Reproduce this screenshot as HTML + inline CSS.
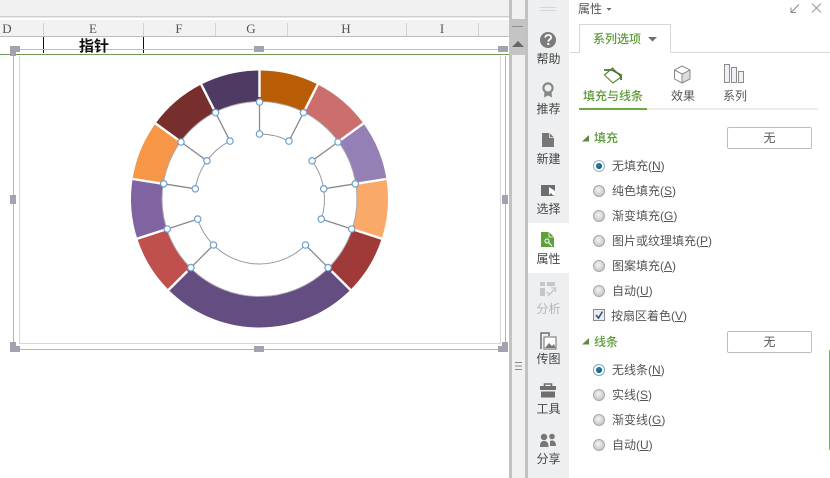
<!DOCTYPE html>
<html><head><meta charset="utf-8">
<style>
html,body{margin:0;padding:0;background:#fff}
body{width:830px;height:478px;position:relative;overflow:hidden;font-family:"Liberation Sans","Noto Sans CJK SC",sans-serif;font-size:12px;color:#555}
.a{position:absolute;white-space:nowrap;line-height:16px}
.c{position:absolute;top:20px;font:13px/17px "Liberation Serif",serif;color:#555;width:20px;text-align:center}
.s{position:absolute;width:41px;left:528px;text-align:center;font-size:12px;line-height:16px;color:#444}
.g{color:#5d9a38}
.b{position:absolute;left:727px;width:83px;height:20px;border:1px solid #bdbdbd;border-radius:2px;text-align:center;line-height:20px;color:#555}
u{text-underline-offset:1px}
svg{position:absolute;left:0;top:0}
</style></head><body>
<svg width="830" height="478" viewBox="0 0 830 478">
<defs><radialGradient id="rg" cx="45%" cy="40%" r="60%"><stop offset="0" stop-color="#f4f4f4"/><stop offset="1" stop-color="#c4c4c4"/></radialGradient>
<radialGradient id="rb" cx="45%" cy="40%" r="60%"><stop offset="0" stop-color="#2b8cab"/><stop offset="1" stop-color="#0f4f6e"/></radialGradient></defs>
<!-- sheet top -->
<rect x="0" y="0" width="509" height="16" fill="#f1f1f1"/>
<rect x="0" y="16" width="509" height="1.5" fill="#cfcfcf"/>
<rect x="0" y="20" width="509" height="16" fill="#f2f2f2"/>
<rect x="0" y="36" width="509" height="1" fill="#bdbdbd"/>
<g stroke="#d2d2d2" stroke-width="1"><path d="M43.5 23V36M143.5 23V36M215.5 23V36M287.5 23V36M406.5 23V36M478.5 23V36"/></g>
<path d="M43.5 37V53M143.5 37V53" stroke="#111" stroke-width="1"/>
<!-- chart frame -->
<path d="M20 49.5H498" stroke="#bcbcbc" stroke-width="1"/>
<path d="M13.5 56V349.5H505.5V56" fill="none" stroke="#b5b5b5" stroke-width="1"/>
<path d="M19.5 56V343.5H500.5V56" fill="none" stroke="#d8d8d8" stroke-width="1"/>
<rect x="0" y="54" width="509" height="1" fill="#6f9c57"/>
<g fill="#a3a3b0">
<path d="M10 46H20V52H16V56H10Z"/><rect x="254" y="46" width="10" height="6"/>
<rect x="498" y="46" width="10" height="6"/><rect x="10" y="195" width="6" height="9"/>
<rect x="502" y="195" width="6" height="9"/><path d="M16 342V346H20V352H10V342Z"/>
<rect x="254" y="346" width="10" height="6"/><path d="M502 342H508V352H498V346H502Z"/>
</g>
<!-- ring -->
<g fill="none" stroke-width="31" transform="rotate(-90 259.5 199)">
<circle cx="259.5" cy="199" r="113" pathLength="360" stroke="#b85c05" stroke-dasharray="27 333"/>
<circle cx="259.5" cy="199" r="113" pathLength="360" stroke="#cc6f6c" stroke-dasharray="27 333" transform="rotate(27 259.5 199)"/>
<circle cx="259.5" cy="199" r="113" pathLength="360" stroke="#9580b5" stroke-dasharray="27 333" transform="rotate(54 259.5 199)"/>
<circle cx="259.5" cy="199" r="113" pathLength="360" stroke="#fba968" stroke-dasharray="27 333" transform="rotate(81 259.5 199)"/>
<circle cx="259.5" cy="199" r="113" pathLength="360" stroke="#a03a38" stroke-dasharray="27 333" transform="rotate(108 259.5 199)"/>
<circle cx="259.5" cy="199" r="113" pathLength="360" stroke="#644d80" stroke-dasharray="90 270" transform="rotate(135 259.5 199)"/>
<circle cx="259.5" cy="199" r="113" pathLength="360" stroke="#c0504d" stroke-dasharray="27 333" transform="rotate(225 259.5 199)"/>
<circle cx="259.5" cy="199" r="113" pathLength="360" stroke="#8064a2" stroke-dasharray="27 333" transform="rotate(252 259.5 199)"/>
<circle cx="259.5" cy="199" r="113" pathLength="360" stroke="#f79646" stroke-dasharray="27 333" transform="rotate(279 259.5 199)"/>
<circle cx="259.5" cy="199" r="113" pathLength="360" stroke="#772f2d" stroke-dasharray="27 333" transform="rotate(306 259.5 199)"/>
<circle cx="259.5" cy="199" r="113" pathLength="360" stroke="#4f3a64" stroke-dasharray="27 333" transform="rotate(333 259.5 199)"/>
</g>
<circle cx="259.5" cy="199" r="97.5" fill="none" stroke="#a9a5ae" stroke-width="1"/>
<!-- white separators -->
<g stroke="#fff" stroke-width="2.4">
<path d="M259.5 97V68"/>
<path d="M305.3 109.1L318.2 83.6"/>
<path d="M340.4 140.2L363.5 123.4"/>
<path d="M358.3 183.4L386.2 179"/>
<path d="M354.6 229.9L381.8 238.7"/>
<path d="M331.6 271.1L351.4 290.9"/>
<path d="M187.4 271.1L167.6 290.9"/>
<path d="M164.4 229.9L137.2 238.7"/>
<path d="M160.7 183.4L132.8 179"/>
<path d="M178.6 140.2L155.5 123.4"/>
<path d="M213.7 109.1L200.8 83.6"/>
</g>
<!-- inner arcs -->
<g fill="none" stroke="#9a9a9a" stroke-width="1" transform="rotate(-90 259.5 199)">
<circle cx="259.5" cy="199" r="65" pathLength="360" stroke-dasharray="27 333"/>
<circle cx="259.5" cy="199" r="65" pathLength="360" stroke-dasharray="54 306" transform="rotate(54 259.5 199)"/>
<circle cx="259.5" cy="199" r="65" pathLength="360" stroke-dasharray="117 243" transform="rotate(135 259.5 199)"/>
<circle cx="259.5" cy="199" r="65" pathLength="360" stroke-dasharray="54 306" transform="rotate(279 259.5 199)"/>
</g>
<g stroke="#8a8a8a" stroke-width="1.3">
<path d="M259.5 102L259.5 134M303.5 112.6L289 141.1M338 142L312.1 160.8M355.3 183.8L323.7 188.8M351.7 229L321.3 219.1M328.1 267.6L305.5 245M190.9 267.6L213.5 245M167.3 229L197.7 219.1M163.7 183.8L195.3 188.8M181 142L206.9 160.8M215.5 112.6L230 141.1"/>
</g>
<g fill="#fff" stroke="#6c9fcb" stroke-width="1.2">
<circle cx="259.5" cy="102" r="3.2"/><circle cx="303.5" cy="112.6" r="3.2"/><circle cx="338" cy="142" r="3.2"/><circle cx="355.3" cy="183.8" r="3.2"/><circle cx="351.7" cy="229" r="3.2"/><circle cx="328.1" cy="267.6" r="3.2"/><circle cx="190.9" cy="267.6" r="3.2"/><circle cx="167.3" cy="229" r="3.2"/><circle cx="163.7" cy="183.8" r="3.2"/><circle cx="181" cy="142" r="3.2"/><circle cx="215.5" cy="112.6" r="3.2"/>
<circle cx="259.5" cy="134" r="3.2"/><circle cx="289" cy="141.1" r="3.2"/><circle cx="312.1" cy="160.8" r="3.2"/><circle cx="323.7" cy="188.8" r="3.2"/><circle cx="321.3" cy="219.1" r="3.2"/><circle cx="305.5" cy="245" r="3.2"/><circle cx="213.5" cy="245" r="3.2"/><circle cx="197.7" cy="219.1" r="3.2"/><circle cx="195.3" cy="188.8" r="3.2"/><circle cx="206.9" cy="160.8" r="3.2"/><circle cx="230" cy="141.1" r="3.2"/>
</g>
<!-- scrollbar -->
<rect x="509" y="0" width="3" height="478" fill="#c2c2c2"/>
<rect x="512" y="0" width="13" height="478" fill="#f1f1f1"/>
<rect x="525" y="0" width="3" height="478" fill="#c2c2c2"/>
<rect x="509" y="19" width="16" height="36" fill="#c4c4c4"/>
<rect x="512" y="26" width="11" height="1" fill="#8d8d8d"/>
<path d="M513 47L519 41L525 47Z" fill="#666" transform="translate(-1 0)"/>
<path d="M515 362.5H522M515 366H522M515 369.5H522" stroke="#8a8a8a" stroke-width="1"/>
<!-- sidebar -->
<rect x="528" y="0" width="41" height="478" fill="#eeeff0"/>
<rect x="528" y="223" width="41" height="50" fill="#fff"/>
<path d="M540 7.5H556M540 10.5H556" stroke="#d6d6d6"/>
<circle cx="548" cy="40" r="8" fill="#7b7b7b"/>
<path d="M545.2 37.6C545.4 35.8 546.6 35 548.2 35C550 35 551.2 36 551.2 37.4C551.2 39.4 548.3 39.4 548.3 41.6" fill="none" stroke="#fff" stroke-width="1.8"/>
<rect x="547.3" y="43" width="2" height="2" fill="#fff"/>
<circle cx="548" cy="88" r="4.6" fill="none" stroke="#888" stroke-width="2.2"/>
<path d="M544.5 92L544 97.5L548 95.5L552 97.5L551.5 92Z" fill="#888"/>
<path d="M542 133H549.5L554 137.5V147H542Z" fill="#777"/><path d="M549.5 133V137.5H554" fill="none" stroke="#eee" stroke-width=".8"/>
<path d="M541 185H555V196H541Z" fill="#6e6e6e"/><path d="M549 187V195L551 193L553 195.5H555V191Z" fill="#fff"/>
<path d="M541 232H549L554 237V247H541Z" fill="#5ba23a"/><path d="M549 232V237H554" fill="none" stroke="#fff" stroke-width=".8"/>
<circle cx="547" cy="241" r="2" fill="none" stroke="#fff"/><path d="M548.5 242.5L552 246" stroke="#fff" stroke-width="1.2"/>
<g fill="#c6c6c6"><rect x="540" y="282" width="5" height="4"/><rect x="547" y="282" width="8" height="4"/><rect x="540" y="288" width="5" height="8"/></g>
<path d="M548 296L555 289M551 288H555.5V292M547 292L549 294" fill="none" stroke="#c6c6c6" stroke-width="1.3"/>
<path d="M541 349V333H549V336" fill="none" stroke="#6e6e6e" stroke-width="1.5"/>
<rect x="544" y="337" width="12" height="12" fill="#fff" stroke="#6e6e6e"/><path d="M545 348L549 343L552 346L554 344L555.5 348Z" fill="#777"/>
<path d="M544.5 386V384H551.5V386" fill="none" stroke="#6e6e6e" stroke-width="1.6"/>
<rect x="540" y="386" width="16" height="4" fill="#6e6e6e"/><rect x="541" y="391.5" width="14" height="6" fill="#6e6e6e"/>
<g fill="#777"><circle cx="544" cy="437" r="3.2"/><path d="M540 447C540 442 541.5 441 544 441C546.5 441 548.5 442 548.5 447Z"/><circle cx="552" cy="436.5" r="2.8"/><path d="M550 441C553 439.5 556 441 556 446H550Z"/></g>
<!-- panel -->
<path d="M606.5 8L611.5 8L609 10.8Z" fill="#666"/>
<path d="M791 12.5L799 4.5M791 7.5V12.5H796" fill="none" stroke="#888" stroke-width="1"/>
<path d="M812 3.5L821 12.5M821 3.5L812 12.5" stroke="#999" stroke-width="1"/>
<path d="M570 52.5H580M670 52.5H830" stroke="#d8d8d8"/>
<path d="M579.5 52.5V24.5H670.5V52.5" fill="none" stroke="#d8d8d8"/>
<path d="M648 37H657L652.5 41.5Z" fill="#6e6e6e"/>
<!-- fill icon -->
<path d="M604.5 75L612.5 68L621 77L613 83Z" fill="none" stroke="#5a8a3a" stroke-width="1.2"/>
<path d="M604 70H612L621 75V80" fill="none" stroke="#4d7a2e" stroke-width="1.8"/>
<!-- cube -->
<path d="M682 66L690 70V79L682 83L674.5 79V70Z" fill="#fff" stroke="#8b8b8b" stroke-width="1"/><path d="M682 74V83L690 79V70Z" fill="#dcdcdc" stroke="#8b8b8b"/><path d="M674.5 70L682 74" stroke="#8b8b8b"/>
<!-- bars -->
<g fill="#eef0f5" stroke="#8b8b8b"><rect x="724.5" y="64.5" width="5" height="18"/><rect x="731.5" y="67.5" width="5" height="15"/><rect x="738.5" y="71.5" width="5" height="11"/></g>
<rect x="647" y="108.5" width="171" height="1" fill="#d9d9d9"/>
<rect x="579" y="108" width="68" height="2" fill="#6bab3f"/>
<path d="M582 141.5H589V135Z" fill="#5d8a3c"/>
<path d="M582 344.5H589V338Z" fill="#5d8a3c"/>
<g id="radios" stroke="#a9a9a9" fill="url(#rg)">
<circle cx="599" cy="191" r="5.5"/><circle cx="599" cy="216" r="5.5"/><circle cx="599" cy="241" r="5.5"/><circle cx="599" cy="266" r="5.5"/><circle cx="599" cy="291" r="5.5"/>
<circle cx="599" cy="395" r="5.5"/><circle cx="599" cy="420" r="5.5"/><circle cx="599" cy="445" r="5.5"/>
</g>
<circle cx="599" cy="166" r="5.5" fill="#fff" stroke="#8fb4cc"/><circle cx="599" cy="166" r="3" fill="url(#rb)"/>
<circle cx="599" cy="370" r="5.5" fill="#fff" stroke="#6fa6cc"/><circle cx="599" cy="370" r="3" fill="url(#rb)"/>
<rect x="593.5" y="309.5" width="11" height="11" fill="#e9eef5" stroke="#8a8a8a"/>
<path d="M596 315L598.5 318L602.5 311.5" fill="none" stroke="#3a4f78" stroke-width="1.6"/>
<rect x="829" y="350" width="1" height="100" fill="#7fb05f"/>
</svg>
<div class="c" style="left:-3px">D</div><div class="c" style="left:83px">E</div><div class="c" style="left:169px">F</div><div class="c" style="left:241px">G</div><div class="c" style="left:336px">H</div><div class="c" style="left:432px">I</div>
<div class="a" style="left:79px;top:39px;font-size:15px;font-weight:700;color:#111">指针</div>
<div class="s" style="top:51px">帮助</div>
<div class="s" style="top:101px">推荐</div>
<div class="s" style="top:151px">新建</div>
<div class="s" style="top:201px">选择</div>
<div class="s" style="top:251px">属性</div>
<div class="s" style="top:301px;color:#b5b5b5">分析</div>
<div class="s" style="top:351px">传图</div>
<div class="s" style="top:401px">工具</div>
<div class="s" style="top:451px">分享</div>
<div class="a" style="left:578px;top:1px">属性</div>
<div class="a g" style="left:593px;top:31px;font-weight:500">系列选项</div>
<div class="a g" style="left:583px;top:88px;font-weight:500">填充与线条</div>
<div class="a" style="left:671px;top:88px">效果</div>
<div class="a" style="left:723px;top:88px">系列</div>
<div class="a g" style="left:594px;top:130px;font-weight:500">填充</div>
<div class="b" style="top:127px">无</div>
<div class="a" style="left:612px;top:158px">无填充(<u>N</u>)</div>
<div class="a" style="left:612px;top:183px">纯色填充(<u>S</u>)</div>
<div class="a" style="left:612px;top:208px">渐变填充(<u>G</u>)</div>
<div class="a" style="left:612px;top:233px">图片或纹理填充(<u>P</u>)</div>
<div class="a" style="left:612px;top:258px">图案填充(<u>A</u>)</div>
<div class="a" style="left:612px;top:283px">自动(<u>U</u>)</div>
<div class="a" style="left:611px;top:308px">按扇区着色(<u>V</u>)</div>
<div class="a g" style="left:594px;top:334px;font-weight:500">线条</div>
<div class="b" style="top:331px">无</div>
<div class="a" style="left:612px;top:362px">无线条(<u>N</u>)</div>
<div class="a" style="left:612px;top:387px">实线(<u>S</u>)</div>
<div class="a" style="left:612px;top:412px">渐变线(<u>G</u>)</div>
<div class="a" style="left:612px;top:437px">自动(<u>U</u>)</div>
</body></html>
